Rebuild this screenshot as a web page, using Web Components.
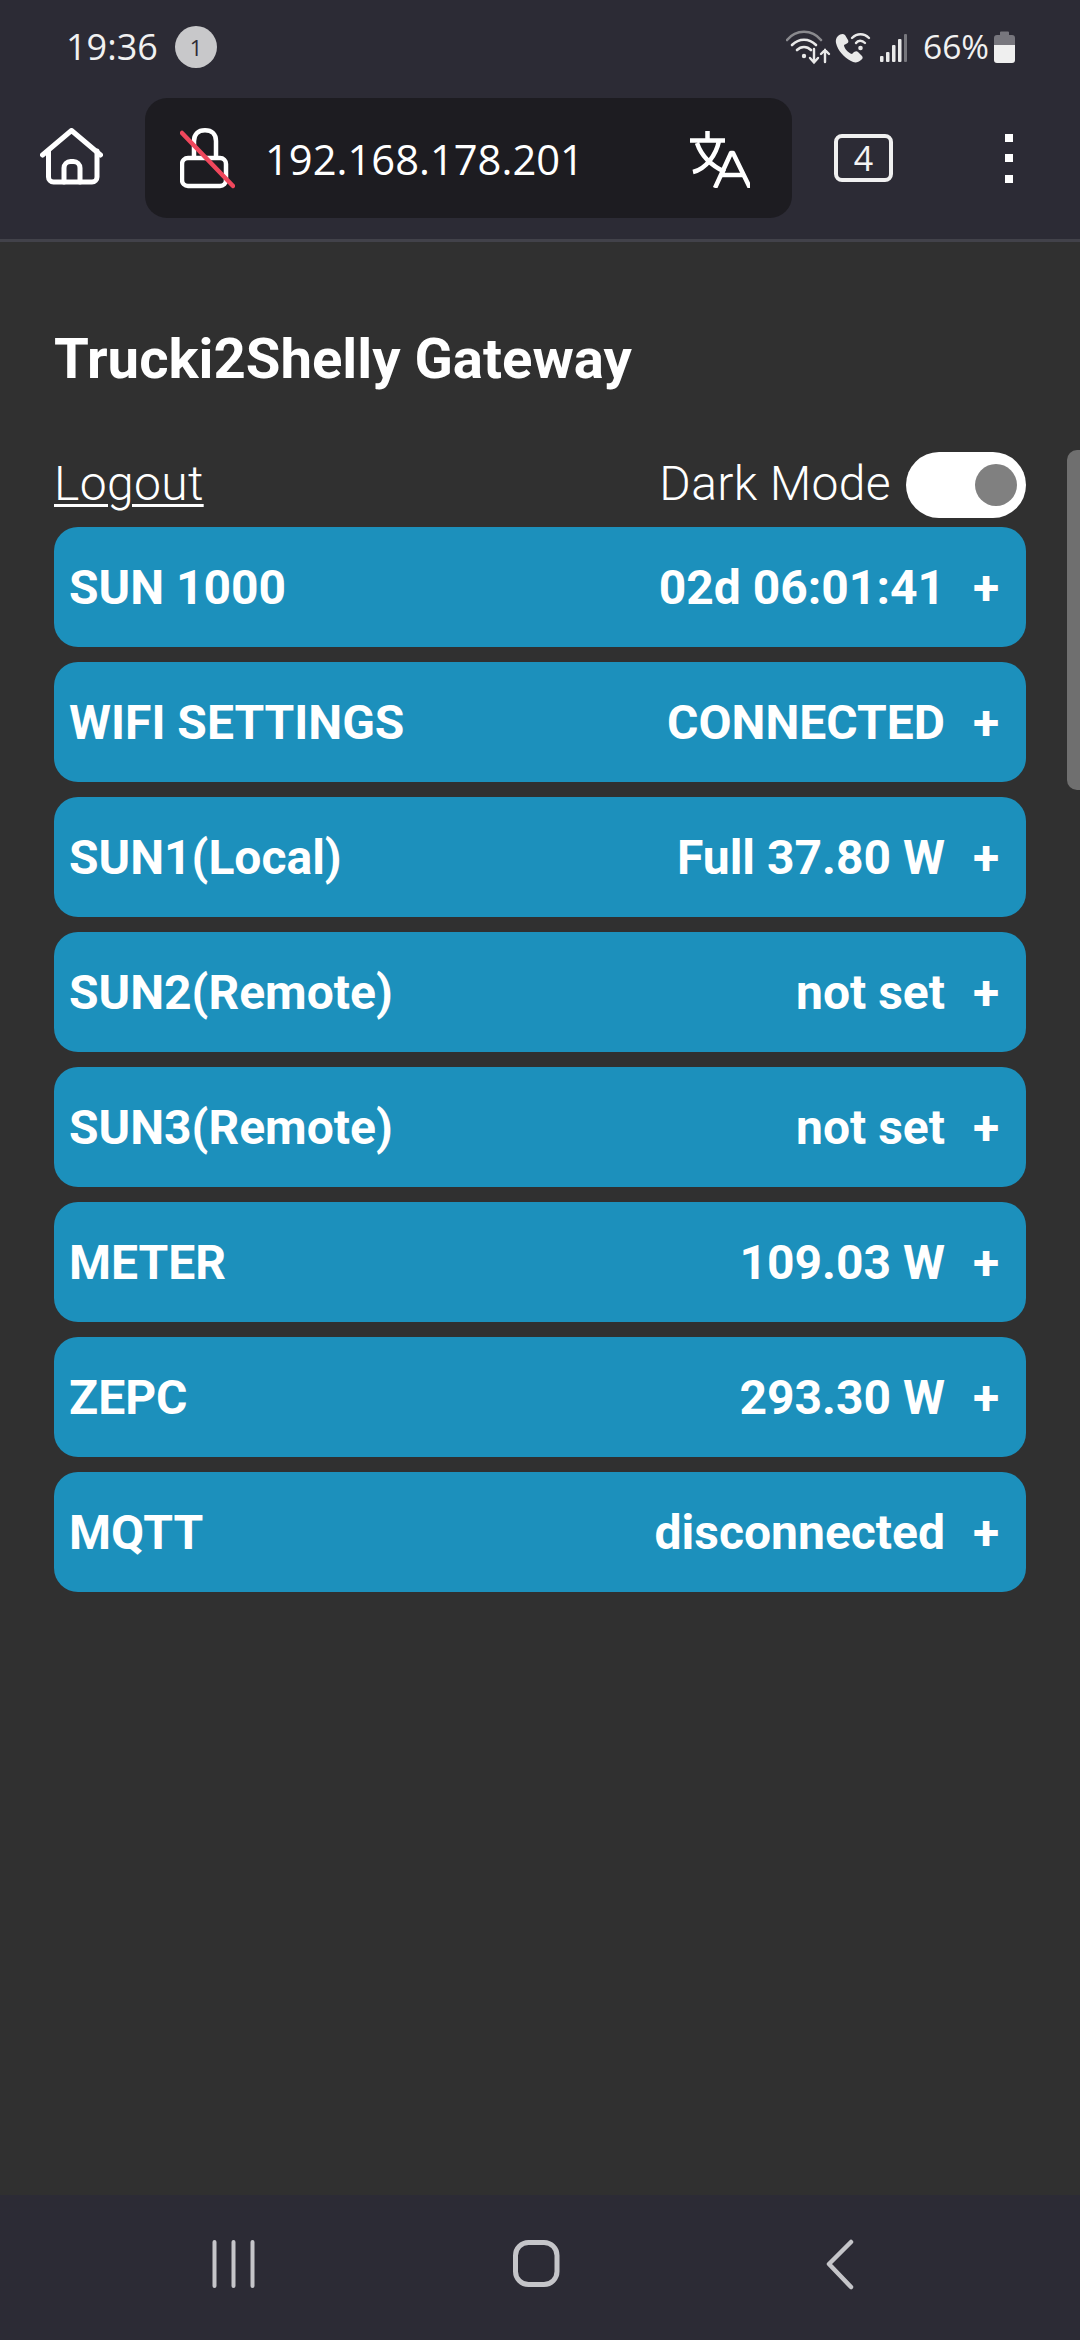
<!DOCTYPE html>
<html><head><meta charset="utf-8"><style>
html,body{margin:0;padding:0;width:1080px;height:2340px;overflow:hidden;background:#303030}
body{font-family:Roboto,sans-serif;color:#fff}
</style></head><body>
<app-shell>
  <status-bar slot="top"></status-bar>
  <browser-bar url="192.168.178.201" tabs="4" slot="top"></browser-bar>
  <gateway-page>
    <acc-row label="SUN 1000" value="02d 06:01:41"></acc-row>
    <acc-row label="WIFI SETTINGS" value="CONNECTED"></acc-row>
    <acc-row label="SUN1(Local)" value="Full 37.80 W"></acc-row>
    <acc-row label="SUN2(Remote)" value="not set"></acc-row>
    <acc-row label="SUN3(Remote)" value="not set"></acc-row>
    <acc-row label="METER" value="109.03 W"></acc-row>
    <acc-row label="ZEPC" value="293.30 W"></acc-row>
    <acc-row label="MQTT" value="disconnected"></acc-row>
  </gateway-page>
  <nav-bar></nav-bar>
</app-shell>
<script>
function def(name, html){
  customElements.define(name, class extends HTMLElement{
    constructor(){super();this.attachShadow({mode:'open'})}
    connectedCallback(){this.shadowRoot.innerHTML = typeof html==='function'?html(this):html; }
  });
}
def('app-shell','<style>:host{display:flex;flex-direction:column;height:2340px}::slotted(gateway-page){flex:1}</style><slot name="top"></slot><slot></slot>');
def('status-bar',`<style>
:host{display:flex;align-items:center;height:96px;background:#2c2b35;color:#f1f1f1;font-family:"Open Sans",sans-serif;box-sizing:border-box;padding:0 65px 2px 66px}
.t{font-size:36px;width:109px;white-space:nowrap;line-height:1}
.b{width:42px;height:42px;border-radius:50%;background:#c8c8ca;color:#2c2b35;font-size:22px;display:flex;align-items:center;justify-content:center}
.sp{flex:1}
svg{display:block;flex:none}
.p{font-size:33.500px;margin-left:16px;white-space:nowrap;width:65px;line-height:1}
</style>
<span class="t">19:36</span><span class="b">1</span><span class="sp"></span>
<svg width="121" height="44" viewBox="0 0 121 44">
 <g fill="none" stroke-linecap="round">
 <path d="M1 15C10 4 26 4 35 15" stroke="#8a8a8e" stroke-width="2.600"/>
 <path d="M6 20C13 13 23 13 30 20" stroke="#e9e9e9" stroke-width="2.600"/>
 <path d="M11 25C15 21 21 21 25 25" stroke="#e9e9e9" stroke-width="2.600"/>
 <path d="M28 24V37M24 33l4 4.500 4-4.500" stroke="#e9e9e9" stroke-width="2.400"/>
 <path d="M39 37V25M35 29l4-4 4 4" stroke="#e9e9e9" stroke-width="2.400"/>
 <path d="M66 13C71 8 78 8 83 13M70 18C72 15 76 15 79 18" stroke="#e9e9e9" stroke-width="2.400"/>
 </g>
 <circle cx="18" cy="31" r="2.200" fill="#e9e9e9"/>
 <circle cx="74.500" cy="23" r="2.300" fill="#e9e9e9"/>
 <path d="M52 11c2-2 5-3 7-1l3 5c1 2 0 3-2 4l-2 1c0 3 4 8 8 9l2-2c2-1 3-1 4 0l4 4c1 1 1 3-1 4-3 3-7 3-10 1-7-4-13-10-15-18-0.500-3 0-5 2-7z" fill="#e9e9e9"/>
 <g fill="#e9e9e9"><rect x="94" y="31" width="3.500" height="6" rx="1"/><rect x="100" y="27" width="3.500" height="10" rx="1"/><rect x="106" y="20" width="3.500" height="17" rx="1"/><rect x="112" y="14" width="3.500" height="23" rx="1"/></g>
 <rect x="118" y="9" width="3" height="28" rx="1" fill="#77777d"/>
</svg>
<span class="p">66%</span>
<svg width="21" height="32" viewBox="0 0 21 32" style="margin-left:6px"><path d="M6 1.500a1 1 0 0 1 1-1h7a1 1 0 0 1 1 1V4h3a3 3 0 0 1 3 3v8H0V7a3 3 0 0 1 3-3h3z" fill="#77767d"/><path d="M0 14h21v15a3 3 0 0 1-3 3H3a3 3 0 0 1-3-3z" fill="#efefef"/></svg>`);
def('browser-bar',el=>`<style>
:host{display:flex;align-items:center;height:146px;box-sizing:border-box;background:#2c2b35;border-bottom:3px solid #42424a;padding-bottom:19px;padding-left:40px}
svg{display:block;flex:none}
.url{display:flex;align-items:center;flex:none;width:647px;height:120px;border-radius:22px;background:#1d1c21;margin-left:42px;box-sizing:border-box;padding-left:35px}
.u{font-family:"Open Sans",sans-serif;font-size:41.700px;line-height:1;margin-left:30px;width:319px;white-space:nowrap;color:#fff;margin-top:2px}
.tab{flex:none;width:59px;height:48px;box-sizing:border-box;border:4px solid #f0f0f0;border-radius:8px;margin-left:42px;display:flex;align-items:center;justify-content:center;font:34px/1 "Open Sans",sans-serif;color:#f4f4f4}
.dots{margin-left:112px;display:flex;flex-direction:column;gap:12.500px}
.dots i{display:block;width:8px;height:8px;background:#fff}
</style>
<svg width="63" height="57" viewBox="0 0 63 57" fill="none" stroke="#fff" stroke-width="5" stroke-linejoin="round" stroke-linecap="round" style="margin-top:-3px"><path d="M2.500 27 31.500 2.500l29 24.500"/><path d="M8.500 23V49a5 5 0 0 0 5 5H52a5 5 0 0 0 5-5V23"/><path d="M24 54V40a6.500 6.500 0 0 1 6.500-6.500h3A6.500 6.500 0 0 1 40 40V54"/></svg>
<div class="url">
<svg width="55" height="62" viewBox="0 0 55 62" fill="none" style="margin-top:2px"><path d="M14 30V13C14 6 18 2.300 25 2.300S36 6 36 13V30" stroke="#fff" stroke-width="4.500"/><path d="M8 30H40a6 6 0 0 1 6 6V52a6 6 0 0 1-6 6H8a6 6 0 0 1-6-6V36a6 6 0 0 1 6-6z" stroke="#fff" stroke-width="4.500"/><path d="M2 5 53 58" stroke="#f0475c" stroke-width="4.500" stroke-linecap="round"/></svg>
<span class="u">${el.getAttribute('url')}</span>
<svg width="60" height="57" viewBox="0 0 60 57" fill="none" stroke="#fff" stroke-width="4.500" style="margin-left:106px;margin-top:3px"><path d="M0 9.500H35M17.500 0V9.500M7 12C11 24 20 34 35 41M29 10C26 24 16 38 3 41"/><path d="M25 57 41 22h2L60 57" stroke-linejoin="round"/><path d="M30 44H55"/></svg>
</div>
<div class="tab">${el.getAttribute('tabs')}</div>
<div class="dots"><i></i><i></i><i></i></div>`);
def('gateway-page',`<style>
:host{display:block;position:relative;background:#303030;box-sizing:border-box;padding:0 54px}
h1{margin:0;font:700 56.300px/64px Roboto,sans-serif;color:#fff;padding-top:85px;height:64px}
.top{display:flex;align-items:center;justify-content:space-between;height:66px;margin-top:61px}
a{font:300 48px/56px Roboto,sans-serif;letter-spacing:.35px;color:#fff;text-decoration:underline;text-decoration-thickness:3px;text-underline-offset:4px;margin-top:-3px}
.dm{display:flex;align-items:center;gap:15px;font:300 48px/56px Roboto,sans-serif;letter-spacing:.35px}
.dm span:first-child{margin-top:-3px}
.sw{width:120px;height:66px;border-radius:33px;background:#fff;box-sizing:border-box;display:flex;justify-content:flex-end;align-items:center;padding-right:9px}
.sw i{display:block;width:42px;height:42px;border-radius:50%;background:#808080}
.list{display:flex;flex-direction:column;gap:15px;margin-top:9px}
.sb{position:absolute;right:0;top:208px;width:13px;height:340px;background:#6f6f6f;border-radius:10px 0 0 10px}
</style>
<h1>Trucki2Shelly Gateway</h1>
<div class="top"><a>Logout</a><div class="dm"><span>Dark Mode</span><span class="sw"><i></i></span></div></div>
<div class="list"><slot></slot></div>
<div class="sb"></div>`);
def('acc-row',el=>`<style>
:host{display:flex;align-items:center;height:120px;border-radius:24px;background:#1c90bc;box-sizing:border-box;padding:1px 26px 0 15px;color:#fff;font:700 48px/1 Roboto,sans-serif}
.l{flex:1}.p{margin-left:27px;width:28px;text-align:center}
</style><span class="l">${el.getAttribute('label')}</span><span class="v">${el.getAttribute('value')}</span><span class="p">+</span>`);
def('nav-bar',`<style>
:host{display:block;height:145px;background:#2c2b35}
svg{display:block}
</style>
<svg width="1080" height="145" viewBox="0 0 1080 145" fill="none" stroke="#c5c5c9" stroke-linecap="round" stroke-linejoin="round">
<path d="M214.500 47V91M233.500 47V91M252.500 47V91" stroke-width="4"/>
<rect x="515.500" y="47.500" width="41.500" height="42" rx="13" stroke-width="5"/>
<path d="M851 47 829 69 851 92" stroke-width="4.500"/>
</svg>`);
</script>
</body></html>
